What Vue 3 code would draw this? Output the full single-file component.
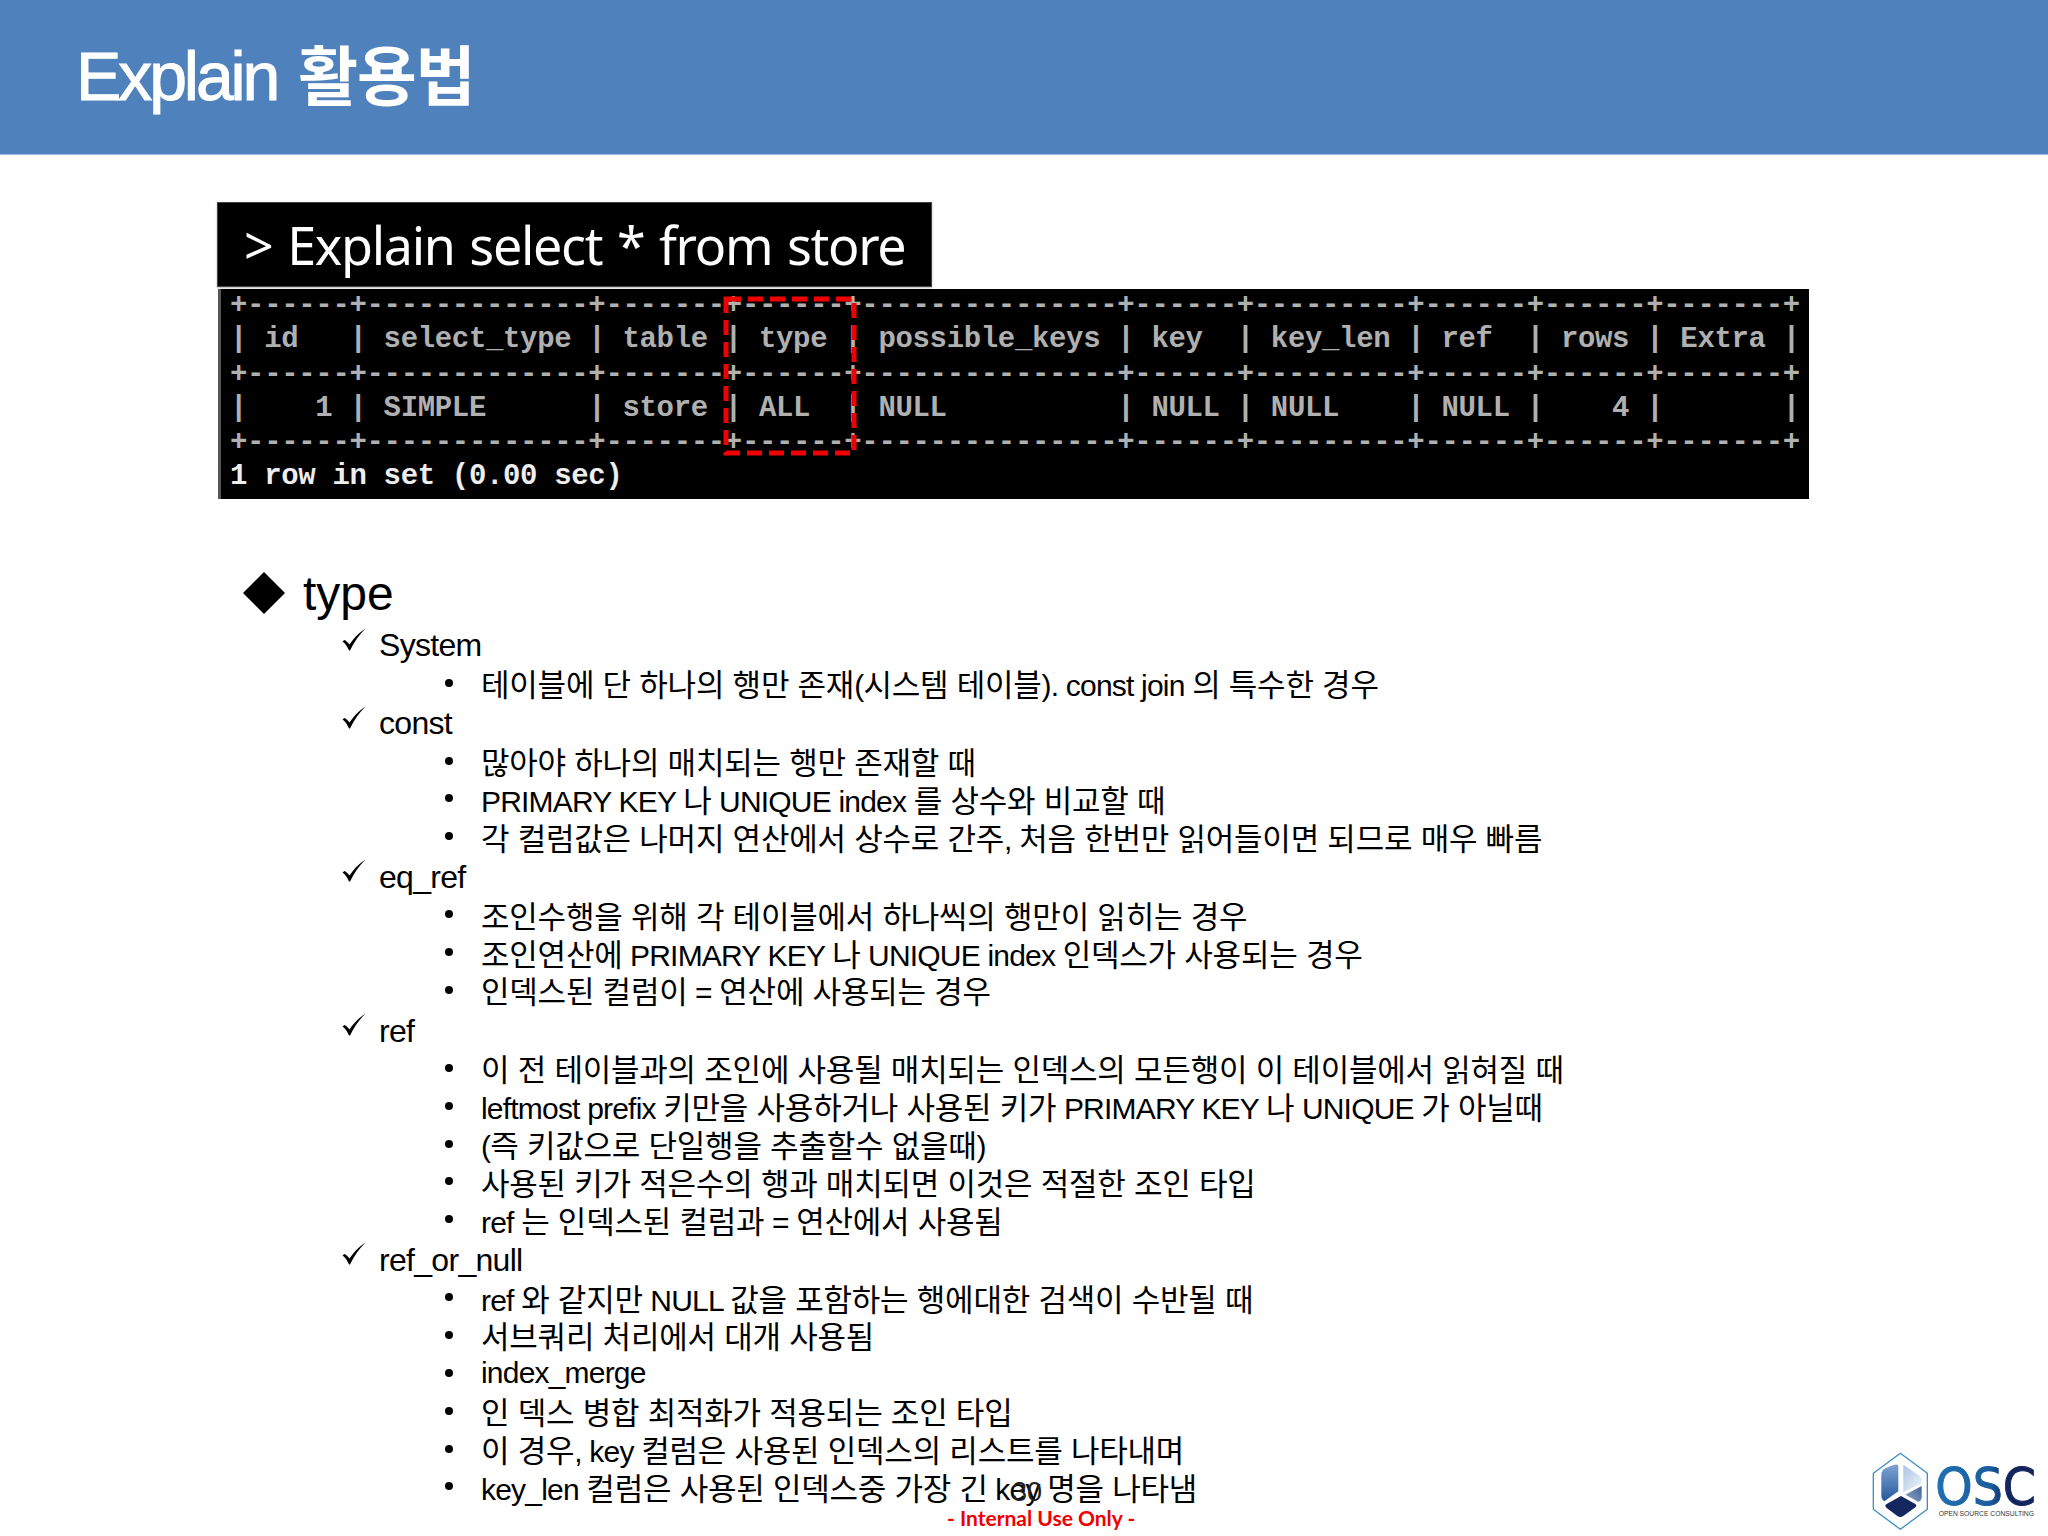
<script setup>
const tableLines = [
  '+------+-------------+-------+------+---------------+------+---------+------+------+-------+',
  '| id   | select_type | table | type | possible_keys | key  | key_len | ref  | rows | Extra |',
  '+------+-------------+-------+------+---------------+------+---------+------+------+-------+',
  '|    1 | SIMPLE      | store | ALL  | NULL          | NULL | NULL    | NULL |    4 |       |',
  '+------+-------------+-------+------+---------------+------+---------+------+------+-------+',
]
const sections = [
  { name: 'System', items: ['테이블에 단 하나의 행만 존재(시스템 테이블). const join 의 특수한 경우'] },
  { name: 'const', items: ['많아야 하나의 매치되는 행만 존재할 때', 'PRIMARY KEY 나 UNIQUE index 를 상수와 비교할 때', '각 컬럼값은 나머지 연산에서 상수로 간주, 처음 한번만 읽어들이면 되므로 매우 빠름'] },
  { name: 'eq_ref', items: ['조인수행을 위해 각 테이블에서 하나씩의 행만이 읽히는 경우', '조인연산에 PRIMARY KEY 나 UNIQUE index 인덱스가 사용되는 경우', '인덱스된 컬럼이 = 연산에 사용되는 경우'] },
  { name: 'ref', items: ['이 전 테이블과의 조인에 사용될 매치되는 인덱스의 모든행이 이 테이블에서 읽혀질 때', 'leftmost prefix 키만을 사용하거나 사용된 키가 PRIMARY KEY 나 UNIQUE 가 아닐때', '(즉 키값으로 단일행을 추출할수 없을때)', '사용된 키가 적은수의 행과 매치되면 이것은 적절한 조인 타입', 'ref 는 인덱스된 컬럼과 = 연산에서 사용됨'] },
  { name: 'ref_or_null', items: ['ref 와 같지만 NULL 값을 포함하는 행에대한 검색이 수반될 때', '서브쿼리 처리에서 대개 사용됨', 'index_merge', '인 덱스 병합 최적화가 적용되는 조인 타입', '이 경우, key 컬럼은 사용된 인덱스의 리스트를 나타내며', 'key_len 컬럼은 사용된 인덱스중 가장 긴 key 명을 나타냄'] },
]
// Hangul runs are set a little larger than Latin runs, as in the slide's mixed fonts.
const runs = (text) =>
  text.split(/([가-힣]+(?: +[가-힣]+)*)/).filter(Boolean).map((t) => ({ t, ko: /[가-힣]/.test(t) }))
</script>

<template>
  <div class="slide">
    <header class="banner"><h1 class="title">Explain <span class="title-ko">활용법</span></h1></header>
    <main class="content">
      <div class="command">&gt; Explain select * from store</div>
      <div class="terminal">
        <pre class="rows"><div v-for="(line, i) in tableLines" :key="i" class="row">{{ line }}</div><div class="row result">1 row in set (0.00 sec)</div></pre>
        <svg class="highlight" width="134" height="160" viewBox="0 0 134 160">
          <rect x="3" y="3" width="128" height="154" fill="none" stroke="#f00000" stroke-width="5" stroke-dasharray="15 7" />
        </svg>
      </div>
      <div class="heading">
        <svg class="diamond" width="42" height="42" viewBox="0 0 42 42"><polygon points="21,0 42,21 21,42 0,21" fill="#000" /></svg>
        <span>type</span>
      </div>
      <section v-for="s in sections" :key="s.name" class="section">
        <div class="check-row">
          <svg class="check" width="24" height="24" viewBox="0 0 24 24"><path d="M0.5 13.5 L2.5 12 C4.5 13 6 14.5 7.5 16.5 C11 11 16 5.5 23.5 0.5 C17 7 12 14 8 22.5 H7 C5.5 19 3.5 15.5 0.5 13.5 Z" fill="#000" /></svg>
          <span>{{ s.name }}</span>
        </div>
        <div v-for="item in s.items" :key="item" class="item"><i class="dot"></i><span class="item-text"><span v-for="(r, i) in runs(item)" :key="i" :class="{ ko: r.ko }">{{ r.t }}</span></span></div>
      </section>
    </main>
    <div class="page-no">30</div>
    <div class="notice">- Internal Use Only -</div>
    <svg class="logo" width="208" height="106" viewBox="0 0 624 318">
      <defs>
        <linearGradient id="lobeL" x1="0" y1="0" x2="0" y2="1"><stop offset="0" stop-color="#7fa3d2" /><stop offset="1" stop-color="#24599c" /></linearGradient>
        <linearGradient id="lobeR" x1="0" y1="0" x2="1" y2="1"><stop offset="0" stop-color="#a9c3e2" /><stop offset="1" stop-color="#f2f6fb" /></linearGradient>
        <linearGradient id="lobeS" x1="0" y1="1" x2="1" y2="0"><stop offset="0" stop-color="#8ea6c8" /><stop offset="1" stop-color="#3f6296" /></linearGradient>
        <linearGradient id="word" x1="0" y1="0" x2="1" y2="0"><stop offset="0" stop-color="#1f72b4" /><stop offset=".55" stop-color="#1a5c9c" /><stop offset=".72" stop-color="#14245f" /><stop offset="1" stop-color="#14245f" /></linearGradient>
      </defs>
      <path d="M181 70 L262 130 V238 L181 298 L100 238 V130 Z" fill="#fff" stroke="#3d8fc2" stroke-width="4" stroke-linejoin="round" />
      <path d="M175 106 V184 L133 214 Q124 208 124 196 V134 Q124 120 138 114 L160 105 Q170 102 175 106 Z" fill="url(#lobeL)" />
      <path d="M190 104 L236 135 Q245 142 245 152 V160 L190 186 Z" fill="url(#lobeR)" />
      <path d="M196 194 L245 168 V204 Q245 212 236 216 Z" fill="url(#lobeS)" />
      <path d="M183 198 L226 222 Q232 227 226 232 L190 258 Q181 264 172 258 L140 234 Q132 227 140 222 Z" fill="#14275f" />
      <text x="286" y="224" class="logo-word" textLength="302" lengthAdjust="spacingAndGlyphs" fill="url(#word)" stroke="url(#word)" stroke-width="3">OSC</text>
      <text x="296" y="258" class="logo-sub" textLength="286" lengthAdjust="spacingAndGlyphs">OPEN SOURCE CONSULTING</text>
    </svg>
  </div>
</template>

<style scoped>
.slide {
  position: relative;
  width: 2048px;
  height: 1536px;
  overflow: hidden;
  background: #fff;
  color: #000;
  font-family: "Liberation Sans", "Noto Sans CJK KR", sans-serif;
}
.banner {
  height: 154px;
  background: #4f81bd;
  border-bottom: 1px solid #9dbde6;
  padding-left: 76px;
  display: flex;
  align-items: center;
}
.title {
  margin: 0;
  color: #fff;
  font-size: 68px;
  font-weight: 400;
  letter-spacing: -3.1px;
  line-height: 1;
  -webkit-text-stroke: 1px #fff;
  position: relative;
  top: -1px;
  white-space: nowrap;
}
.title-ko {
  font-weight: 700;
  letter-spacing: -1px;
  font-size: 65px;
  -webkit-text-stroke: 0;
  margin-left: 5px;
}
.content {
  padding: 47px 0 0 217px;
}
.command {
  width: 715px;
  height: 85px;
  box-sizing: border-box;
  background: #000;
  color: #fff;
  border: 1px solid #444;
  padding-left: 26px;
  font-family: "Noto Sans", sans-serif;
  font-size: 52px;
  letter-spacing: -1.3px;
  word-spacing: 2.5px;
  line-height: 84px;
  white-space: nowrap;
  box-shadow: 0 1px 2px rgba(0, 0, 0, .3);
}
.terminal {
  position: relative;
  margin: 2px 0 0 1px;
  width: 1591px;
  height: 210px;
  box-sizing: border-box;
  background: #000;
  border-left: 3px solid #555;
  padding-left: 9px;
  overflow: hidden;
}
.rows {
  margin: 0;
  font-family: "Liberation Mono", monospace;
  font-size: 29px;
  font-weight: 700;
  letter-spacing: -.34px;
  line-height: 34.3px;
  color: #b0b0b0;
}
.row { white-space: pre; }
.result { color: #eee; }
.highlight {
  position: absolute;
  left: 502px;
  top: 7px;
}
.heading {
  display: flex;
  align-items: center;
  gap: 18px;
  margin: 63.4px 0 0 26px;
  height: 61.3px;
  font-size: 48px;
}
.section { font-size: 30px; }
.check-row {
  display: flex;
  align-items: center;
  height: 35.7px;
  padding: 4.4px 0 0 125px;
  font-size: 32px;
  letter-spacing: -.7px;
}
.check { margin-right: 13px; position: relative; top: -6px; }
.item {
  display: flex;
  align-items: center;
  height: 37.85px;
  padding-left: 228px;
  letter-spacing: -.8px;
  white-space: nowrap;
}
.item-text { white-space: pre; }
.ko { font-size: 31px; letter-spacing: -.22px; }
.dot {
  width: 8px;
  height: 8px;
  border-radius: 50%;
  background: #000;
  margin-right: 28px;
  flex: none;
}
.page-no {
  position: absolute;
  left: 1012px;
  top: 1477px;
  font-size: 27px;
  color: #222;
}
.notice {
  position: absolute;
  left: 947px;
  top: 1505px;
  font-family: Lato, sans-serif;
  font-weight: 700;
  font-size: 21px;
  color: #f00000;
  white-space: nowrap;
}
.logo {
  position: absolute;
  left: 1840px;
  top: 1430px;
}
.logo-word {
  font-family: "DejaVu Sans", sans-serif;
  font-weight: 400;
  font-size: 156px;
}
.logo-sub {
  font-family: "Liberation Sans", sans-serif;
  font-size: 21px;
  fill: #333;
}
</style>

<style>
body { margin: 0; }
</style>
